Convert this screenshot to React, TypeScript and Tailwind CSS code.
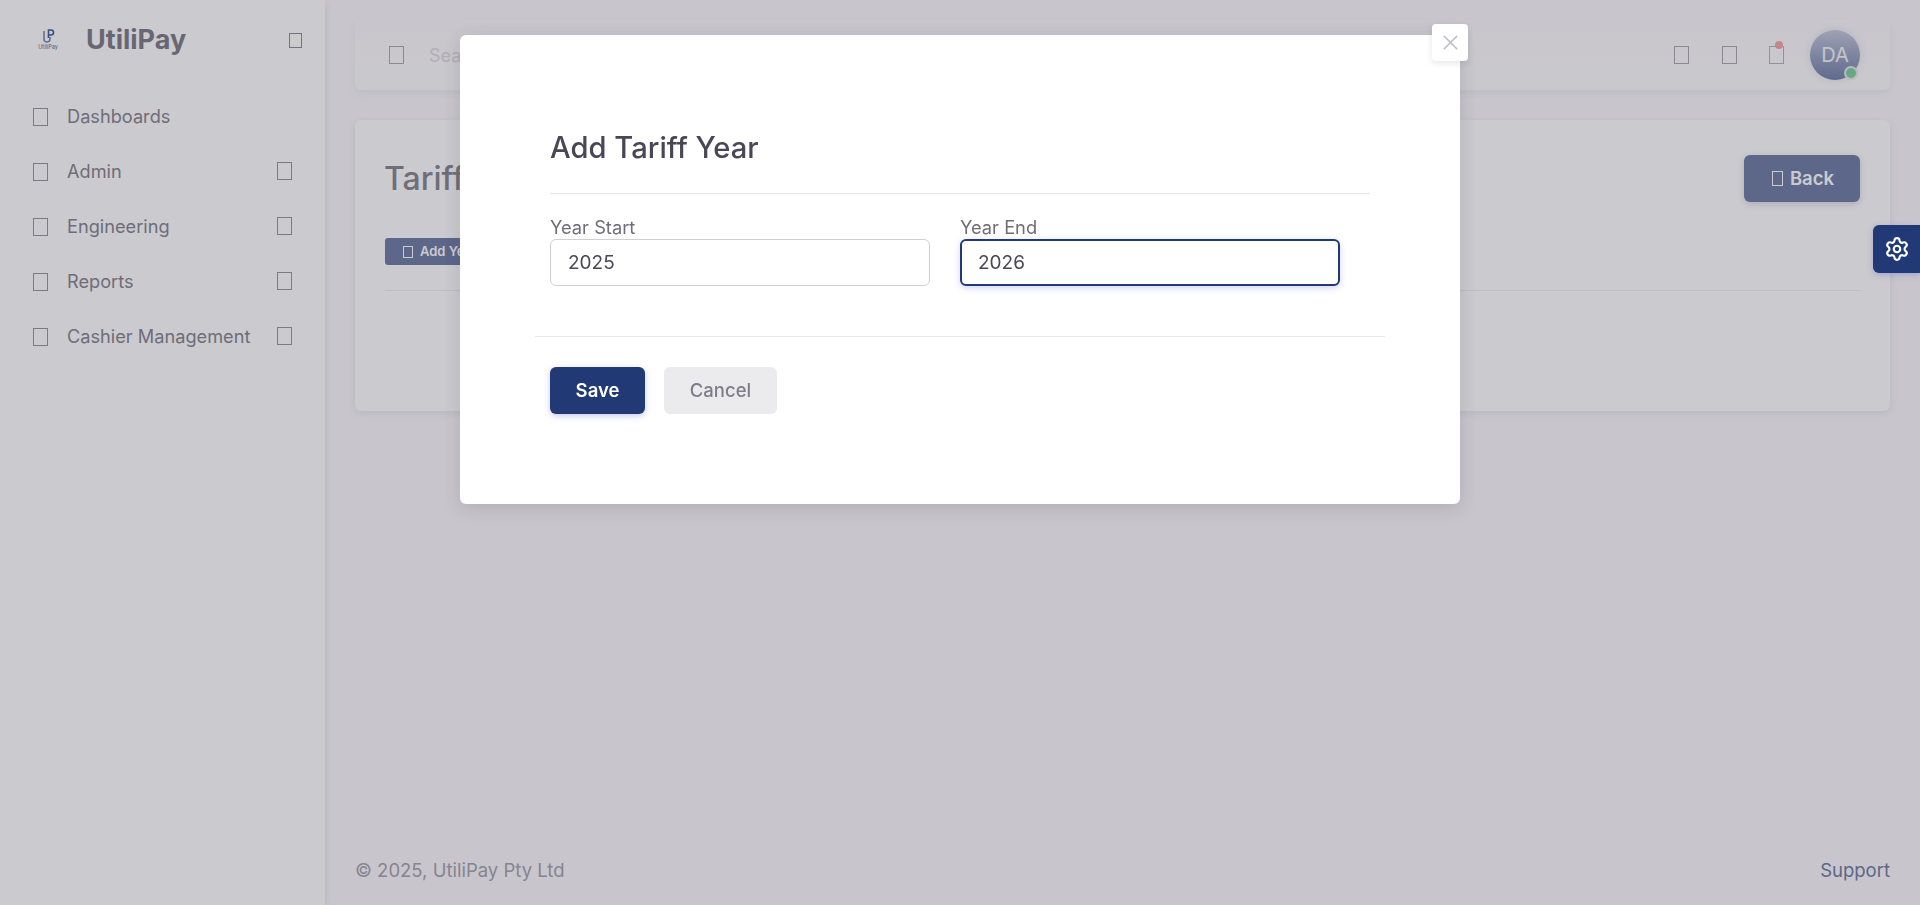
import { Settings, X } from 'lucide-react';

// Icon font never loaded in the original, so icons show up as empty boxes
function Tofu({ className = '' }: { className?: string }) {
  return <span className={`inline-block shrink-0 border border-current ${className}`} />;
}

const navItems = [
  { label: 'Dashboards', chevron: false },
  { label: 'Admin', chevron: true },
  { label: 'Engineering', chevron: true },
  { label: 'Reports', chevron: true },
  { label: 'Cashier Management', chevron: true },
];

function Logo() {
  return (
    <div className="flex w-[20px] flex-col items-center">
      <svg width="16" height="15" viewBox="0 0 16 15" fill="none">
        <path d="M4 2v8a3 3 0 0 0 6 0V8" stroke="#7c88a8" strokeWidth="1.6" />
        <path d="M8.5 9V1h2.5a2.4 2.4 0 0 1 0 5H8.5" stroke="#3f5a9c" strokeWidth="1.6" />
      </svg>
      <span className="text-[5.5px] leading-[7px] whitespace-nowrap text-[#56688f]">UtiliPay</span>
    </div>
  );
}

function Sidebar() {
  return (
    <aside className="flex w-[325px] shrink-0 flex-col bg-white shadow-[0_2px_8px_rgba(47,43,61,0.12)]">
      <div className="flex h-[80px] items-center pr-[23px] pl-[38px]">
        <Logo />
        <span className="ml-[28px] text-[27px] font-bold text-[#7b7a86]">UtiliPay</span>
        <Tofu className="mt-[1px] ml-auto h-[15px] w-[13px] text-[#8b8a95]" />
      </div>
      <nav className="mt-[9px] flex flex-col pr-[33px] pl-[33px]">
        {navItems.map((item) => (
          <div key={item.label} className="flex h-[55px] items-center text-[#84838f]">
            <Tofu className="h-[18px] w-[15px] text-[#96959f]" />
            <span className="ml-[19px] text-[18.2px] whitespace-nowrap">{item.label}</span>
            {item.chevron && <Tofu className="mt-[-1px] ml-auto h-[18px] w-[15px] text-[#96959f]" />}
          </div>
        ))}
      </nav>
    </aside>
  );
}

function Topbar() {
  return (
    <header className="flex h-[70px] items-center rounded-b-md bg-gradient-to-b from-white/0 to-white/60 pr-[30px] pl-[34px] shadow-[0_4px_8px_rgba(47,43,61,0.06)]">
      <Tofu className="h-[18px] w-[15px] text-[#a8a7b0]" />
      <span className="ml-[25px] text-[18px] text-[#dcdbe0]">Search</span>
      <div className="ml-auto flex items-center">
        <Tofu className="h-[18px] w-[15px] text-[#a8a7b0]" />
        <Tofu className="ml-[33px] h-[18px] w-[15px] text-[#a8a7b0]" />
        <div className="relative ml-[32px] flex">
          <Tofu className="h-[18px] w-[15px] text-[#b4b3bc]" />
          <span className="absolute top-[-5px] left-[6px] h-[8px] w-[8px] rounded-full bg-[#f5a6a8]" />
        </div>
        <div className="relative ml-[26px] flex h-[50px] w-[50px] items-center justify-center rounded-full bg-gradient-to-b from-[#c5c9dc] to-[#6f7fa8] text-[20px] text-white/90 shadow-[0_0_8px_rgba(107,123,163,0.2)]">
          DA
          <span className="absolute right-[2px] bottom-0 h-[14px] w-[14px] rounded-full border-2 border-[#e8e8ee] bg-[#7ad19d]" />
        </div>
      </div>
    </header>
  );
}

function TariffCard() {
  return (
    <section className="mt-[30px] h-[291px] rounded-md bg-white px-[30px] pt-[35px] shadow-[0_2px_8px_rgba(47,43,61,0.1)]">
      <div className="flex items-center justify-between">
        <h1 className="ml-[-1px] text-[32px] leading-[47px] font-medium text-[#85848f]">Tariff Years</h1>
        <button className="flex h-[47px] w-[116px] items-center justify-center gap-[7px] rounded-md bg-[#6b7ba3] pl-[2px] text-[18.5px] font-semibold text-white shadow-[0_2px_6px_rgba(107,123,163,0.3)]">
          <Tofu className="h-[15px] w-[11px]" />
          Back
        </button>
      </div>
      <button className="mt-[36px] flex h-[27px] items-center gap-[7px] rounded-[3px] bg-[#6b7ba3] px-[18px] text-[13px] font-semibold text-white">
        <Tofu className="h-[12px] w-[10px]" />
        Add Year
      </button>
      <div className="mt-[25px] border-t border-[#eeeef0]" />
    </section>
  );
}

function Field({ label, value, focused }: { label: string; value: string; focused?: boolean }) {
  return (
    <div className="flex w-[380px] flex-col">
      <label className="text-[18.3px] leading-[23px] text-[#6f6d7a]">{label}</label>
      <input
        readOnly
        value={value}
        className={
          focused
            ? 'h-[47px] rounded-md border-2 border-[#213a75] bg-white px-[16px] text-[19px] text-[#4a4857] shadow-[0_2px_6px_rgba(80,80,220,0.25)] outline-none'
            : 'h-[47px] rounded-md border border-[#d0cfd3] bg-white px-[17px] text-[19px] text-[#4a4857] outline-none'
        }
      />
    </div>
  );
}

function TariffModal() {
  return (
    <div className="fixed top-[35px] left-[460px] h-[469px] w-[1000px] rounded-md bg-white px-[75px] pt-[91px] shadow-[0_4px_18px_rgba(47,43,61,0.16)]">
      <button className="absolute top-[-11px] right-[-8px] flex h-[37px] w-[36px] items-center justify-center rounded-[4px] bg-white text-[#bdbcc3] shadow-[0_2px_6px_rgba(47,43,61,0.12)]">
        <X size={25} strokeWidth={1.5} />
      </button>
      <div className="mx-[15px]">
        <h2 className="text-[29.2px] leading-[44px] font-medium text-[#494755]">Add Tariff Year</h2>
        <div className="mt-[23px] border-t border-[#e8e7ea]" />
        <div className="mt-[22px] flex gap-[30px]">
          <Field label="Year Start" value="2025" />
          <Field label="Year End" value="2026" focused />
        </div>
      </div>
      <div className="mt-[50px] border-t border-[#e8e7ea]" />
      <div className="mt-[30px] ml-[15px] flex gap-[19px]">
        <button className="h-[47px] w-[95px] rounded-md bg-[#213a75] text-[18.5px] font-semibold text-white shadow-[0_2px_6px_rgba(80,80,220,0.3)]">
          Save
        </button>
        <button className="h-[47px] w-[113px] rounded-md bg-[#ebebed] text-[18.5px] font-medium text-[#7f7d8a]">
          Cancel
        </button>
      </div>
    </div>
  );
}

export default function App() {
  return (
    <div className="relative flex h-[905px] overflow-hidden bg-[#fbfafd] font-['Inter',sans-serif]">
      <Sidebar />
      <main className="flex flex-1 flex-col px-[30px] pt-[20px]">
        <Topbar />
        <TariffCard />
        <footer className="mt-auto flex h-[48px] items-start justify-between text-[18.5px] text-[#a3a2ad]">
          <span>© 2025, UtiliPay Pty Ltd</span>
          <span className="text-[#6b7ba3]">Support</span>
        </footer>
      </main>

      <div className="fixed inset-0 bg-[#2f2b3d]/25" />
      <TariffModal />

      <button className="fixed top-[225px] right-0 flex h-[48px] w-[47px] items-center justify-center rounded-l-md bg-[#213a75] text-white shadow-[0_2px_6px_rgba(80,80,220,0.3)]">
        <Settings size={26} strokeWidth={2} />
      </button>
    </div>
  );
}
